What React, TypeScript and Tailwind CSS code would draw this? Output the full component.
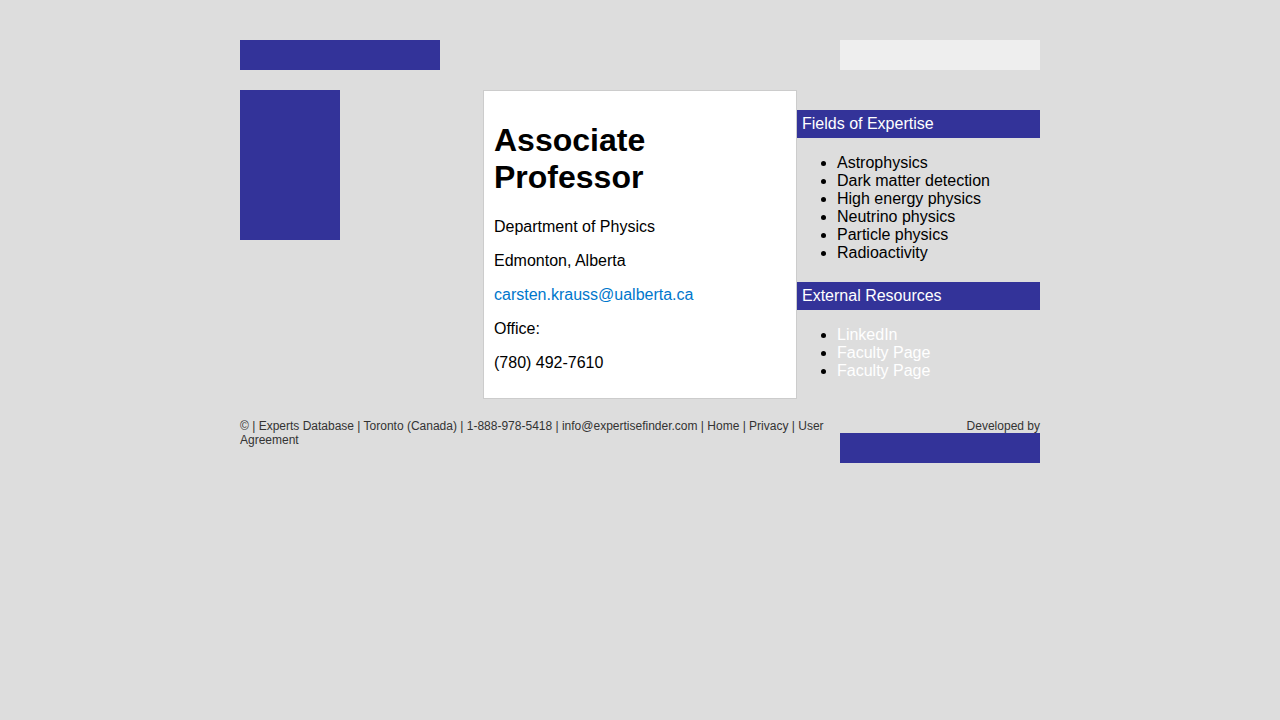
import React from 'react';

const fields = [
  'Astrophysics',
  'Dark matter detection',
  'High energy physics',
  'Neutrino physics',
  'Particle physics',
  'Radioactivity',
];

const resources = ['LinkedIn', 'Faculty Page', 'Faculty Page'];

const App: React.FC = () => {
  return (
    <div className="min-h-screen bg-[#dddddd] font-['Liberation_Sans',Arial,sans-serif] text-black">
      <div className="w-[800px] mx-auto pt-10">
        {/* Header */}
        <header className="flex justify-between">
          <div className="w-[200px] h-[30px] bg-[#333399]"></div>
          <div className="w-[200px] h-[30px] bg-[#eeeeee]"></div>
        </header>

        {/* Main */}
        <main className="flex items-start mt-5">
          <div className="w-[243px] shrink-0">
            <div className="w-[100px] h-[150px] bg-[#333399]"></div>
          </div>

          <div className="w-[314px] shrink-0 bg-white border border-[#cccccc] p-[10px] text-[16px] leading-[18px]">
            <h1 className="text-[32px] leading-[37px] font-bold mt-[21px] mb-[22px]">
              Associate
              <br />
              Professor
            </h1>
            <p className="my-4">Department of Physics</p>
            <p className="my-4">Edmonton, Alberta</p>
            <p className="my-4">
              <a href="#" className="text-[#0077cc]">
                carsten.krauss@ualberta.ca
              </a>
            </p>
            <p className="my-4">Office:</p>
            <p className="my-4">(780) 492-7610</p>
          </div>

          <div className="w-[243px] shrink-0 text-[16px] leading-[18px]">
            <h3 className="mt-5 bg-[#333399] text-white p-[5px]">Fields of Expertise</h3>
            <ul className="list-disc pl-10 my-4">
              {fields.map((f) => (
                <li key={f}>{f}</li>
              ))}
            </ul>
            <h3 className="mt-5 bg-[#333399] text-white p-[5px]">External Resources</h3>
            <ul className="list-disc pl-10 my-4">
              {resources.map((r, i) => (
                <li key={i}>
                  <a href="#" className="text-white">
                    {r}
                  </a>
                </li>
              ))}
            </ul>
          </div>
        </main>

        {/* Footer */}
        <footer className="flex justify-between mt-5 text-[12px] leading-[14px] text-[#333333]">
          <div className="w-[600px]">
            © | Experts Database | Toronto (Canada) | 1-888-978-5418 | info@expertisefinder.com | Home | Privacy | User Agreement
          </div>
          <div className="w-[200px] flex flex-col items-end">
            <span>Developed by</span>
            <div className="w-[200px] h-[30px] bg-[#333399]"></div>
          </div>
        </footer>
      </div>
    </div>
  );
};

export default App;
